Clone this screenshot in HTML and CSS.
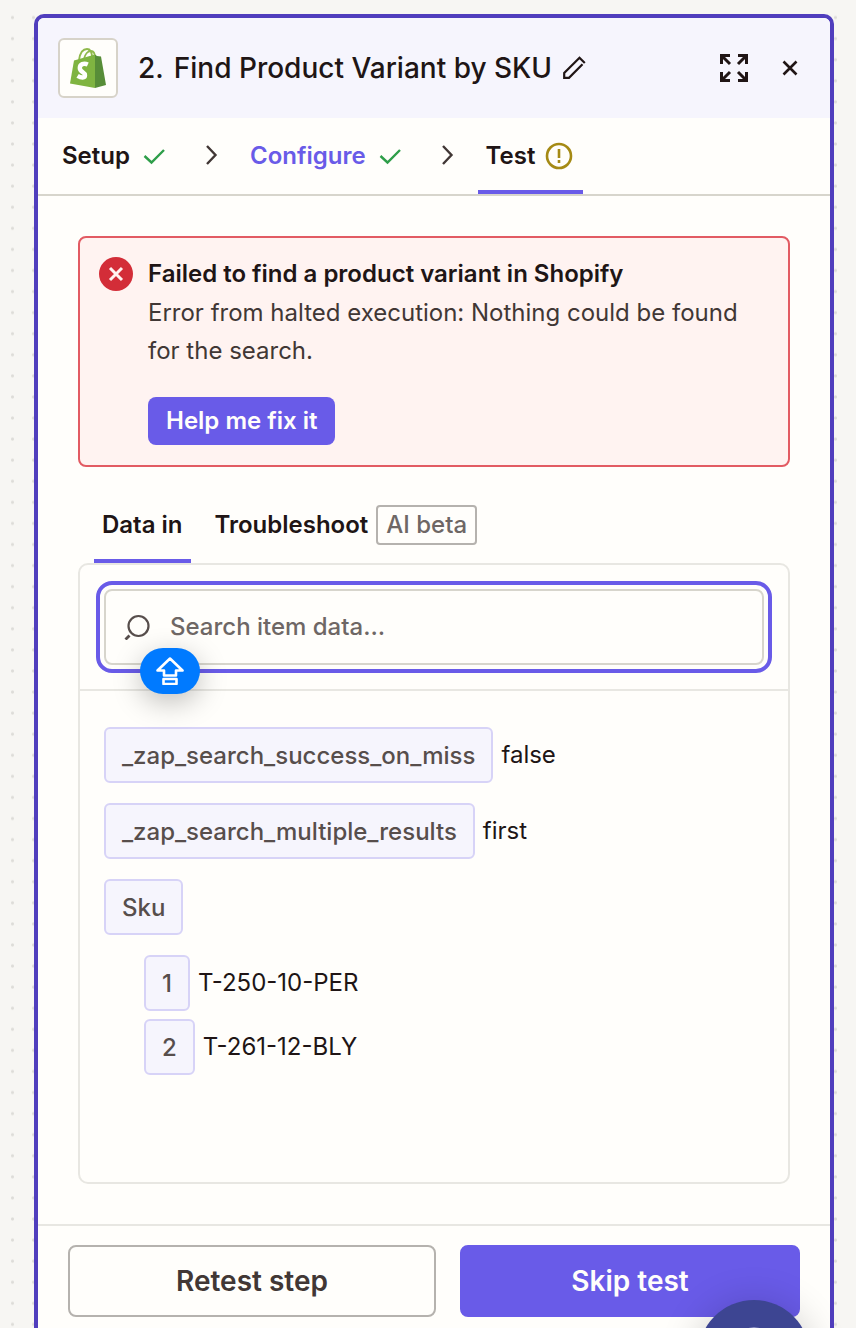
FILE: index.html
```html
<!DOCTYPE html>
<html lang="en">
<head>
<meta charset="utf-8">
<meta name="viewport" content="width=device-width, initial-scale=1">
<title>Find Product Variant by SKU</title>
<link rel="stylesheet" href="styles.css">
</head>
<body>
<main class="panel">
  <header class="panel-header">
    <span class="app-logo">
      <svg width="36" height="42" viewBox="0 0 36 42" aria-label="Shopify" role="img">
        <path d="M9 13C10 6 13 2 17 2c4 0 5 4 5 9M14 12c1-5 4-8 7-8 3 0 4 3 4 7" fill="none" stroke="#8fb94b" stroke-width="1.800"/>
        <path d="M4 13.500 25 7.500V41L0 36.500z" fill="#7fb441"/>
        <path d="M25 7.500 27 9l4 .6L36 38l-11 3z" fill="#578d38"/>
        <path d="M17.800 17.500c-4-1.800-8-.3-8 3.500 0 4.200 5.200 4 5.200 7.200 0 3-3.800 2.800-7.400.6" fill="none" stroke="#fff" stroke-width="4.400"/>
      </svg>
    </span>
    <h1 class="title"><span>2.</span><span>Find Product Variant by SKU</span></h1>
    <button class="icon-button edit" aria-label="Rename step">
      <svg width="24" height="24" viewBox="0 0 24 24" fill="none" stroke="#201515" stroke-width="2.200"><path d="M22.800 7 17.500 1.700 2.200 17V21.800H7L20.500 8.300"/></svg>
    </button>
    <button class="icon-button expand" aria-label="Expand">
      <svg width="28" height="28" viewBox="0 0 28 28" fill="none" stroke="#201515" stroke-width="3"><path d="M1.500 10V1.500H10M2 2l8 8M18 1.500h8.500V10M26 2l-8 8M1.500 18v8.500H10M2 26l8-8M26.500 18v8.500H18M26 26l-8-8"/></svg>
    </button>
    <button class="icon-button" aria-label="Close">
      <svg width="16" height="16" viewBox="0 0 16 16" fill="none" stroke="#201515" stroke-width="2.600"><path d="m1.500 1.500 13 13M14.500 1.500l-13 13"/></svg>
    </button>
  </header>

  <nav class="steps" aria-label="Step progress">
    <button class="tab">Setup
      <svg width="32" height="32" viewBox="0 0 32 32" fill="none" stroke="#2e9e49" stroke-width="2.400"><path d="m6.500 16 7 6.500L26 10"/></svg>
    </button>
    <svg class="chevron" width="32" height="32" viewBox="0 0 32 32" fill="none" stroke="#413735" stroke-width="2.400"><path d="m13 6 8.500 9-8.500 9"/></svg>
    <button class="tab tab-link">Configure
      <svg width="32" height="32" viewBox="0 0 32 32" fill="none" stroke="#2e9e49" stroke-width="2.400"><path d="m6.500 16 7 6.500L26 10"/></svg>
    </button>
    <svg class="chevron" width="32" height="32" viewBox="0 0 32 32" fill="none" stroke="#413735" stroke-width="2.400"><path d="m13 6 8.500 9-8.500 9"/></svg>
    <button class="tab tab-active" aria-current="step">Test
      <svg width="32" height="32" viewBox="0 0 32 32" fill="none" stroke="#a58a14" stroke-width="2.600"><circle cx="16" cy="16" r="12"/><path d="M16 9v9M16 20v3"/></svg>
    </button>
  </nav>

  <div class="content">
    <section class="alert" role="alert">
      <svg class="alert-icon" width="34" height="34" viewBox="0 0 34 34"><circle cx="17" cy="17" r="17" fill="#d32d38"/><path d="m11 11 12 12M23 11 11 23" stroke="#fff3f1" stroke-width="3"/></svg>
      <div>
        <h2 class="alert-title">Failed to find a product variant in Shopify</h2>
        <p class="alert-text">Error from halted execution: Nothing could be found for the search.</p>
        <button class="help">Help me fix it</button>
      </div>
    </section>

    <div class="data-tabs" role="tablist">
      <button class="data-tab data-tab-active" role="tab" aria-selected="true">Data in</button>
      <button class="data-tab" role="tab" aria-selected="false">Troubleshoot <span class="badge">AI beta</span></button>
    </div>

    <section class="data-box">
      <div class="search-area">
        <label class="search">
          <svg width="26" height="26" viewBox="0 0 26 26" fill="none" stroke="#574e4c" stroke-width="2.200"><circle cx="14.500" cy="12" r="10"/><path d="m5.500 21.500-4 4" stroke-width="2.800"/></svg>
          <input class="search-input" type="text" placeholder="Search item data…" aria-label="Search item data">
        </label>
        <span class="caps-lock">
          <svg width="28" height="28" viewBox="0 0 28 28" fill="none" stroke="#fff" stroke-width="2.600" stroke-linejoin="round"><path d="M14 1.500 26.500 13.500H20V18.500H8V13.500H1.500zM7.500 22h13v5H7.500z"/></svg>
        </span>
      </div>
      <ul class="fields">
        <li><span class="chip">_zap_search_success_on_miss</span>false</li>
        <li><span class="chip">_zap_search_multiple_results</span>first</li>
        <li><span class="chip">Sku</span></li>
        <li>
          <ul class="items">
            <li><span class="chip">1</span>T-250-10-PER</li>
            <li><span class="chip">2</span>T-261-12-BLY</li>
          </ul>
        </li>
      </ul>
    </section>
  </div>

  <footer class="actions">
    <button class="action">Retest step</button>
    <button class="action action-primary">Skip test</button>
  </footer>
</main>
<button class="chat" aria-label="Open help">
  <svg width="60" height="60" viewBox="0 0 60 60" fill="none" stroke="#dcdcf5" stroke-width="3"><circle cx="30" cy="30" r="27"/></svg>
</button>
</body>
</html>
```
FILE: styles.css
```css
* {
  box-sizing: border-box;
}

body {
  --dot: radial-gradient(circle, #dddcd8 0, #dddcd8 1px, transparent 2px);
  margin: 0;
  min-height: 100vh;
  padding: 14px 22px 0 34px;
  display: flex;
  background-color: #f7f6f3;
  background-image: var(--dot), var(--dot), var(--dot);
  background-size: 21px 21px;
  background-position: left 2px top 7px, left 23px top 7px, right 10px top 7px;
  background-repeat: no-repeat round;
  color: #201515;
  font-family: Inter, "Liberation Sans", sans-serif;
  font-size: 24px;
  line-height: 38px;
}

button {
  font: inherit;
  color: inherit;
  background: none;
  border: 0;
  padding: 0;
  cursor: pointer;
}

svg {
  display: block;
  flex: none;
}

h1, h2, p, ul {
  margin: 0;
  padding: 0;
  list-style: none;
}

.panel {
  flex: 1;
  min-width: 0;
  display: flex;
  flex-direction: column;
  background: #fffefb;
  border: 4px solid #503ebd;
  border-bottom: 0;
  border-radius: 10px 10px 0 0;
}

.panel-header {
  display: flex;
  align-items: center;
  padding: 20px 32px 20px 20px;
  background: #f6f5fd;
  border-radius: 6px 6px 0 0;
}

.app-logo {
  width: 60px;
  height: 60px;
  display: flex;
  align-items: center;
  justify-content: center;
  background: #fffefb;
  border: 2px solid #d7d3c9;
  border-radius: 6px;
}

.title {
  display: flex;
  gap: 10px;
  margin-left: 20px;
  font-size: 28px;
  font-weight: 500;
}

.edit {
  margin-left: 10px;
}

.expand {
  margin-left: auto;
  margin-right: 34px;
}

.steps {
  display: flex;
  align-items: stretch;
  padding: 0 16px;
  border-bottom: 2px solid #d7d5cc;
}

.tab {
  display: flex;
  align-items: center;
  gap: 8px;
  padding: 4px 8px 0;
  height: 76px;
  border-bottom: 4px solid transparent;
  font-weight: 600;
}

.tab-link {
  color: #695be8;
}

.tab-active {
  border-bottom-color: #695be8;
}

.chevron {
  align-self: center;
  margin: 0 16px;
}

.content {
  flex: 1;
  display: flex;
  flex-direction: column;
  padding: 40px;
}

.alert {
  display: flex;
  gap: 15px;
  padding: 17px 19px 20px;
  background: #fff3f1;
  border: 2px solid #e25b63;
  border-radius: 8px;
}

.alert-icon {
  margin-top: 2px;
}

.alert-title {
  font-size: 24px;
  font-weight: 600;
}

.alert-text {
  margin-top: 1px;
  color: #413735;
}

.help {
  height: 48px;
  margin-top: 27px;
  padding: 0 18px;
  border-radius: 8px;
  background: #695be8;
  color: #fffefb;
  font-weight: 600;
}

.data-tabs {
  display: flex;
  gap: 16px;
  margin-top: 38px;
  padding: 0 16px;
}

.data-tab {
  display: flex;
  align-items: center;
  gap: 8px;
  padding: 0 8px 14px;
  border-bottom: 4px solid transparent;
  font-weight: 600;
}

.data-tab-active {
  border-bottom-color: #695be8;
}

.badge {
  padding: 0 8px;
  line-height: 36px;
  border: 2px solid #b5b2ae;
  border-radius: 4px;
  color: #6e6765;
  font-weight: 500;
}

.data-box {
  flex: 1;
  border: 2px solid #e8e7e2;
  border-radius: 10px;
}

.search-area {
  position: relative;
  padding: 24px;
  border-bottom: 2px solid #e8e7e2;
}

.search {
  display: flex;
  align-items: center;
  gap: 20px;
  height: 76px;
  padding: 0 18px;
  border: 2px solid #d7d5cc;
  border-radius: 8px;
  outline: 4px solid #695be8;
  outline-offset: 4px;
}

.search-input {
  flex: 1;
  min-width: 0;
  padding: 0;
  border: 0;
  outline: 0;
  background: none;
  color: inherit;
  font: inherit;
}

.search-input::placeholder {
  color: #6e6765;
  font-weight: 500;
  opacity: 1;
}

.caps-lock {
  position: absolute;
  left: 60px;
  bottom: -5px;
  width: 60px;
  height: 46px;
  display: flex;
  align-items: center;
  justify-content: center;
  border-radius: 23px;
  background: #007aff;
  box-shadow: 0 8px 28px rgba(0, 0, 0, 0.25);
}

.fields {
  display: grid;
  gap: 20px;
  padding: 36px 24px;
}

.fields li {
  display: flex;
  align-items: center;
  gap: 8px;
}

.items {
  display: grid;
  gap: 8px;
  padding-left: 40px;
}

.chip {
  padding: 1px 16px 0;
  line-height: 51px;
  border: 2px solid #d7d3f7;
  border-radius: 6px;
  background: #f6f5fd;
  color: #574e4c;
  font-weight: 500;
}

.actions {
  display: flex;
  gap: 24px;
  padding: 19px 30px 11px;
  border-top: 2px solid #e8e7e2;
}

.action {
  flex: 13 1 0;
  height: 72px;
  border: 2px solid #b5b2ae;
  border-radius: 8px;
  color: #413735;
  font-size: 28px;
  font-weight: 600;
}

.action-primary {
  flex-grow: 12;
  border-color: #695be8;
  background: #695be8;
  color: #fffefb;
}

.chat {
  position: fixed;
  right: 46px;
  bottom: -84px;
  width: 112px;
  height: 112px;
  display: flex;
  align-items: center;
  justify-content: center;
  border-radius: 50%;
  background: #3d4592;
  box-shadow: 0 4px 40px rgba(0, 0, 0, 0.2);
}
```
